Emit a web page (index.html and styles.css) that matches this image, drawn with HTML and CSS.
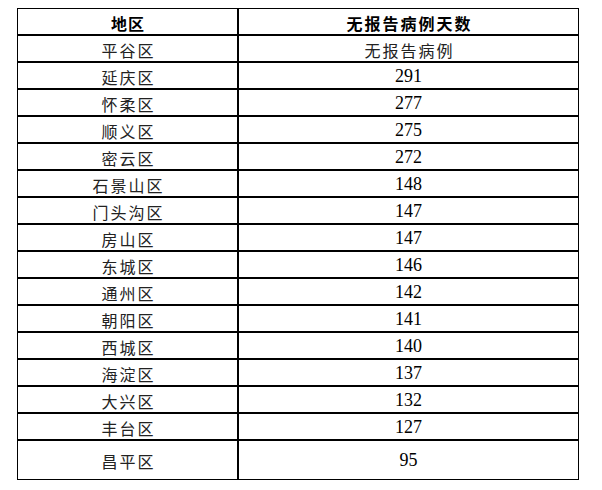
FILE: index.html
```html
<!DOCTYPE html>
<html lang="zh-CN">
<head>
<meta charset="utf-8">
<title>无报告病例天数</title>
<link rel="stylesheet" href="styles.css">
</head>
<body>
<div class="table">
  <div class="cell head name">地区</div>
  <div class="cell head val">无报告病例天数</div>
  <div class="cell name">平谷区</div>
  <div class="cell val cjk">无报告病例</div>
  <div class="cell name">延庆区</div>
  <div class="cell val">291</div>
  <div class="cell name">怀柔区</div>
  <div class="cell val">277</div>
  <div class="cell name">顺义区</div>
  <div class="cell val">275</div>
  <div class="cell name">密云区</div>
  <div class="cell val">272</div>
  <div class="cell name">石景山区</div>
  <div class="cell val">148</div>
  <div class="cell name">门头沟区</div>
  <div class="cell val">147</div>
  <div class="cell name">房山区</div>
  <div class="cell val">147</div>
  <div class="cell name">东城区</div>
  <div class="cell val">146</div>
  <div class="cell name">通州区</div>
  <div class="cell val">142</div>
  <div class="cell name">朝阳区</div>
  <div class="cell val">141</div>
  <div class="cell name">西城区</div>
  <div class="cell val">140</div>
  <div class="cell name">海淀区</div>
  <div class="cell val">137</div>
  <div class="cell name">大兴区</div>
  <div class="cell val">132</div>
  <div class="cell name">丰台区</div>
  <div class="cell val">127</div>
  <div class="cell name last">昌平区</div>
  <div class="cell val last">95</div>
</div>
</body>
</html>
```
FILE: styles.css
```css
html, body {
  margin: 0;
  padding: 0;
  background: #ffffff;
}

body {
  padding: 8px 0 0 17px;
}

.table {
  display: grid;
  grid-template-columns: 221px 339px;
  width: 560px;
  border: 1px solid #000;
  color: #111;
}

.cell {
  box-sizing: border-box;
  height: 27px;
  border-bottom: 2px solid #000;
  display: flex;
  align-items: center;
  justify-content: center;
  padding-top: 2px;
}

.head {
  height: 27px;
}

.name {
  border-right: 2px solid #000;
  font-family: "Noto Sans CJK SC", "Noto Sans", sans-serif;
  font-size: 16px;
  letter-spacing: 2px;
  text-indent: 2px;
  color: #222;
}

.val {
  font-family: "Liberation Serif", "Times New Roman", serif;
  font-size: 18px;
  color: #000;
}

.val.cjk {
  font-family: "Noto Sans CJK SC", "Noto Sans", sans-serif;
  font-size: 16px;
  letter-spacing: 2px;
  text-indent: 2px;
  color: #222;
}

.head.name {
  font-weight: 700;
  letter-spacing: 1px;
  text-indent: 1px;
  color: #000;
}

.head.val {
  font-family: "Noto Sans CJK SC", "Noto Sans", sans-serif;
  font-size: 16px;
  font-weight: 700;
  letter-spacing: 2px;
  text-indent: 2px;
}

.last {
  height: 38px;
  border-bottom: none;
  padding-top: 1px;
}
```
